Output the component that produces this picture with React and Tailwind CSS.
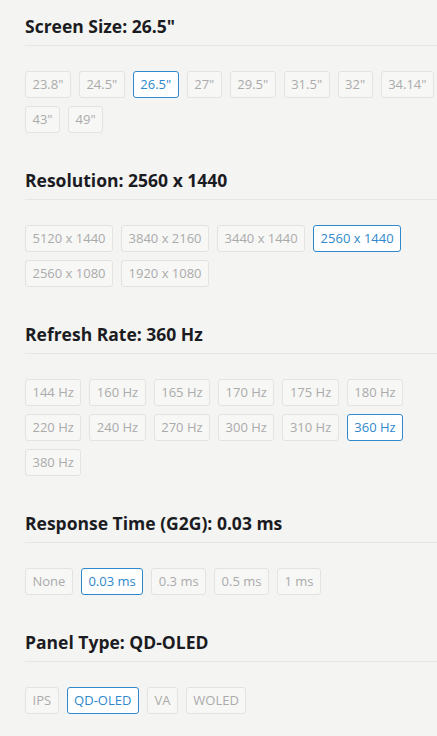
import React from "react";

const sections = [
  {
    title: 'Screen Size: 26.5"',
    options: ['23.8"', '24.5"', '26.5"', '27"', '29.5"', '31.5"', '32"', '34.14"', '43"', '49"'],
    selected: '26.5"',
  },
  {
    title: "Resolution: 2560 x 1440",
    options: ["5120 x 1440", "3840 x 2160", "3440 x 1440", "2560 x 1440", "2560 x 1080", "1920 x 1080"],
    selected: "2560 x 1440",
  },
  {
    title: "Refresh Rate: 360 Hz",
    options: ["144 Hz", "160 Hz", "165 Hz", "170 Hz", "175 Hz", "180 Hz", "220 Hz", "240 Hz", "270 Hz", "300 Hz", "310 Hz", "360 Hz", "380 Hz"],
    selected: "360 Hz",
  },
  {
    title: "Response Time (G2G): 0.03 ms",
    options: ["None", "0.03 ms", "0.3 ms", "0.5 ms", "1 ms"],
    selected: "0.03 ms",
  },
  {
    title: "Panel Type: QD-OLED",
    options: ["IPS", "QD-OLED", "VA", "WOLED"],
    selected: "QD-OLED",
  },
];

export default function App() {
  return (
    <div
      className="min-h-[736px] w-[437px] bg-[#f4f4f2] pl-[25px] pt-[14px]"
      style={{ fontFamily: '"Open Sans", "Noto Sans", sans-serif' }}
    >
      {sections.map((s, i) => (
        <div key={s.title} className={i === 0 ? "" : "mt-[35px]"}>
          <div className="border-b border-[#e6e6e4] pb-[7px]">
            <h3 className="text-[17.5px] font-bold leading-[24px] text-[#1b1b22]">{s.title}</h3>
          </div>
          <div className="mt-[25px] flex flex-wrap gap-[8px]">
            {s.options.map((o) => {
              const sel = o === s.selected;
              return (
                <div
                  key={o}
                  className={
                    "h-[27px] rounded-[3px] border px-[6.5px] text-[13px] leading-[25px] " +
                    (sel
                      ? "border-[#2f88cc] bg-white text-[#2f88cc]"
                      : "border-[#e3e3e1] bg-[#f7f7f6] text-[#ababab]")
                  }
                >
                  {o}
                </div>
              );
            })}
          </div>
        </div>
      ))}
    </div>
  );
}
